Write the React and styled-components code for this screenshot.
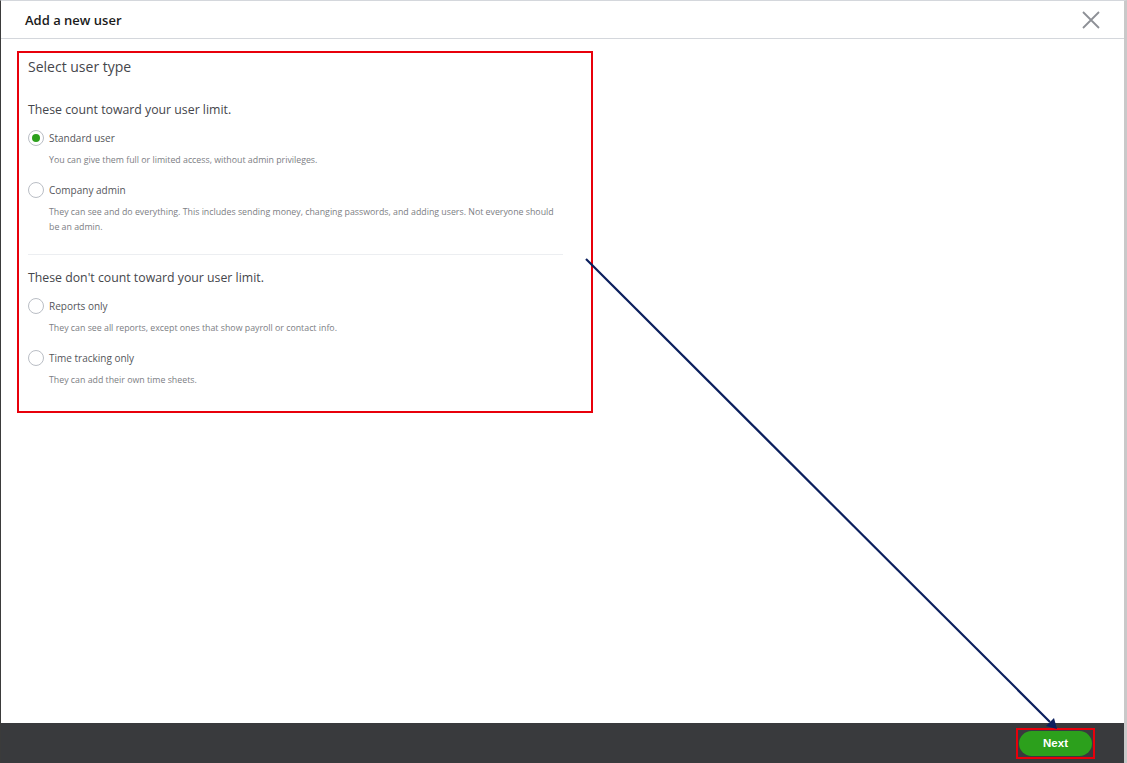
import React, { useState } from "react";
import styled, { createGlobalStyle } from "styled-components";

const GlobalStyle = createGlobalStyle`
  html, body {
    margin: 0;
    padding: 0;
    background: #ffffff;
  }
  body {
    font-family: "Open Sans", "Liberation Sans", sans-serif;
    color: #393a3d;
  }
`;

const Frame = styled.div`
  position: relative;
  height: 763px;
  box-sizing: border-box;
  display: flex;
  flex-direction: column;
  border-left: 1px solid #3b3b3b;
  border-top: 1px solid #d4d7dc;
  border-right: 3px solid #c9c9c9;
  overflow: hidden;
`;

const Header = styled.div`
  height: 37px;
  flex-shrink: 0;
  display: flex;
  align-items: center;
  justify-content: space-between;
  padding: 0 24px 0 24px;
  border-bottom: 1px solid #d4d7dc;
`;

const Title = styled.h1`
  margin: 0;
  font-size: 13px;
  font-weight: 600;
  color: #1a1a1a;
`;

const CloseButton = styled.button`
  border: 0;
  background: none;
  padding: 0;
  width: 20px;
  height: 20px;
  display: flex;
  align-items: center;
  justify-content: center;
  cursor: pointer;
  margin-right: -1px;
`;

const Body = styled.div`
  flex: 1;
  padding: 12px 0 0 16px;
`;

const HighlightBox = styled.div`
  width: 576px;
  height: 362px;
  box-sizing: border-box;
  border: 2px solid #e8000b;
  padding: 4px 28px 0 9px;
`;

const SectionTitle = styled.h2`
  margin: 0 0 25px 0;
  font-size: 14px;
  font-weight: 400;
  color: #45464b;
`;

const GroupTitle = styled.h3`
  margin: 0 0 12px 0;
  font-size: 12.3px;
  font-weight: 400;
  color: #45464b;
`;

const Group = styled.div`
  padding-bottom: ${(p) => (p.$divided ? "5px" : "0")};
  border-bottom: ${(p) => (p.$divided ? "1px solid #eceef1" : "none")};
  margin-bottom: ${(p) => (p.$divided ? "14px" : "0")};
`;

const Option = styled.label`
  display: block;
  margin-bottom: 14px;
  cursor: pointer;
`;

const OptionRow = styled.div`
  display: flex;
  align-items: center;
  gap: 5px;
  height: 16px;
`;

const Radio = styled.span`
  width: 16px;
  height: 16px;
  box-sizing: border-box;
  border-radius: 50%;
  border: 1px solid #babec5;
  display: flex;
  align-items: center;
  justify-content: center;
  flex-shrink: 0;
  &::after {
    content: "";
    width: 8px;
    height: 8px;
    border-radius: 50%;
    background: ${(p) => (p.$checked ? "#2ca01c" : "transparent")};
  }
`;

const OptionLabel = styled.span`
  font-size: 10px;
  color: #55565b;
`;

const OptionDesc = styled.p`
  margin: 7px 0 0 21px;
  font-size: 8.8px;
  line-height: 15px;
  color: #7c7e84;
`;

const Footer = styled.div`
  height: 40px;
  flex-shrink: 0;
  background: #393a3d;
  display: flex;
  align-items: center;
  justify-content: flex-end;
  padding-right: 29px;
`;

const ButtonOutline = styled.div`
  border: 2px solid #e8000b;
  padding: 1px;
  display: flex;
`;

const NextButton = styled.button`
  width: 73px;
  height: 25px;
  border: 0;
  border-radius: 13px;
  background: #2ca01c;
  color: #ffffff;
  font-family: "Liberation Sans", Arial, sans-serif;
  font-weight: 700;
  font-size: 11.5px;
  cursor: pointer;
`;

const Annotation = styled.svg`
  position: absolute;
  left: -1px;
  top: -1px;
  pointer-events: none;
`;

const groups = [
  {
    title: "These count toward your user limit.",
    divided: true,
    options: [
      {
        id: "standard",
        label: "Standard user",
        desc: "You can give them full or limited access, without admin privileges.",
      },
      {
        id: "admin",
        label: "Company admin",
        desc: "They can see and do everything. This includes sending money, changing passwords, and adding users. Not everyone should be an admin.",
      },
    ],
  },
  {
    title: "These don't count toward your user limit.",
    divided: false,
    options: [
      {
        id: "reports",
        label: "Reports only",
        desc: "They can see all reports, except ones that show payroll or contact info.",
      },
      {
        id: "time",
        label: "Time tracking only",
        desc: "They can add their own time sheets.",
      },
    ],
  },
];

const App = () => {
  const [selected, setSelected] = useState("standard");

  return (
    <>
      <GlobalStyle />
      <Frame>
        <Header>
          <Title>Add a new user</Title>
          <CloseButton aria-label="Close">
            <svg width="18" height="18" viewBox="0 0 18 18">
              <path
                d="M1 1 L17 17 M17 1 L1 17"
                stroke="#8d9096"
                strokeWidth="1.8"
                fill="none"
              />
            </svg>
          </CloseButton>
        </Header>
        <Body>
          <HighlightBox>
            <SectionTitle>Select user type</SectionTitle>
            {groups.map((group) => (
              <Group key={group.title} $divided={group.divided}>
                <GroupTitle>{group.title}</GroupTitle>
                {group.options.map((opt) => (
                  <Option key={opt.id} onClick={() => setSelected(opt.id)}>
                    <OptionRow>
                      <Radio $checked={selected === opt.id} />
                      <OptionLabel>{opt.label}</OptionLabel>
                    </OptionRow>
                    <OptionDesc>{opt.desc}</OptionDesc>
                  </Option>
                ))}
              </Group>
            ))}
          </HighlightBox>
        </Body>
        <Footer>
          <ButtonOutline>
            <NextButton>Next</NextButton>
          </ButtonOutline>
        </Footer>
        <Annotation width="1127" height="763" viewBox="0 0 1127 763">
          <line
            x1="586"
            y1="259"
            x2="1050"
            y2="722"
            stroke="#0b1f5e"
            strokeWidth="2.2"
          />
          <polygon points="1057,729 1046,726 1054,718" fill="#0b1f5e" />
        </Annotation>
      </Frame>
    </>
  );
};

export default App;
